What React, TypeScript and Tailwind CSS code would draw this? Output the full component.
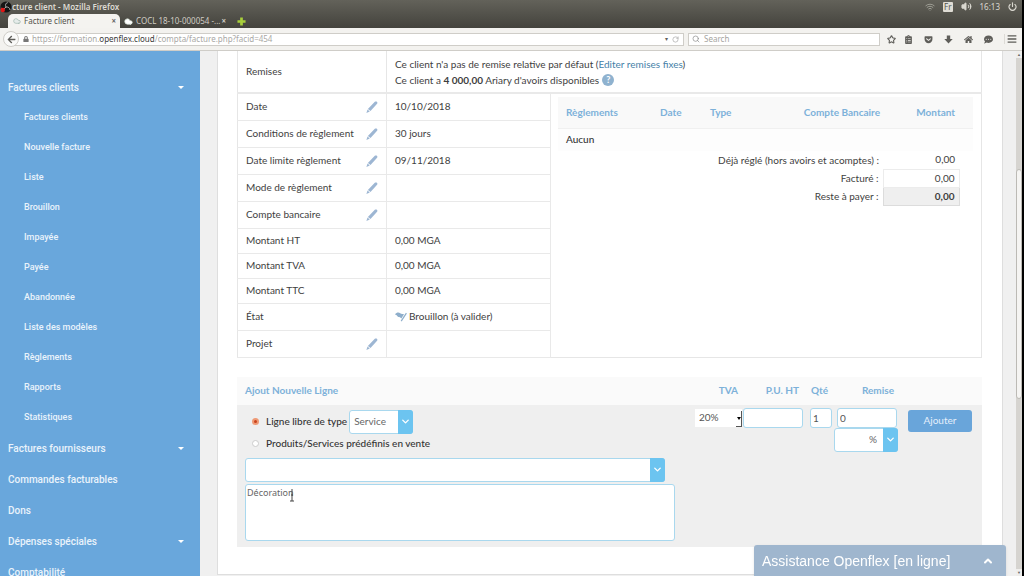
import React, { useState } from "react";
import { ChevronDown, ChevronUp, Cloud, RotateCw, Search, Star, Wifi, Volume2, Power } from "lucide-react";
import { FaBars, FaClipboardList, FaCommentDots, FaGetPocket, FaHome, FaLock, FaArrowLeft } from "react-icons/fa";

interface MenuItem {
  label: string;
  expandable?: boolean;
  children?: string[];
}

/** Sidebar entries */
const MENU: MenuItem[] = [
  {
    label: "Factures clients",
    expandable: true,
    children: [
      "Factures clients",
      "Nouvelle facture",
      "Liste",
      "Brouillon",
      "Impayée",
      "Payée",
      "Abandonnée",
      "Liste des modèles",
      "Règlements",
      "Rapports",
      "Statistiques",
    ],
  },
  { label: "Factures fournisseurs", expandable: true },
  { label: "Commandes facturables" },
  { label: "Dons" },
  { label: "Dépenses spéciales", expandable: true },
  { label: "Comptabilité" },
];

interface InvoiceField {
  label: string;
  value?: string;
  editable?: boolean;
  draft?: boolean;
}

const FIELDS: InvoiceField[] = [
  { label: "Date", value: "10/10/2018", editable: true },
  { label: "Conditions de règlement", value: "30 jours", editable: true },
  { label: "Date limite règlement", value: "09/11/2018", editable: true },
  { label: "Mode de règlement", editable: true },
  { label: "Compte bancaire", editable: true },
  { label: "Montant HT", value: "0,00 MGA" },
  { label: "Montant TVA", value: "0,00 MGA" },
  { label: "Montant TTC", value: "0,00 MGA" },
  { label: "État", value: "Brouillon (à valider)", draft: true },
  { label: "Projet", editable: true },
];

function PencilIcon() {
  return (
    <svg viewBox="0 0 12 12" className="h-3 w-3" fill="#9db6d3">
      <path d="M8.800.8c.6-.6 1.500-.5 2.100 0s.7 1.300.2 1.900L4.500 10 1.900 7.900zM1.500 8.500l2.300 1.900L.4 11.900z" />
    </svg>
  );
}

function DraftIcon() {
  return (
    <svg viewBox="0 0 12 10" className="h-[10px] w-3" fill="none">
      <path d="M0 2.6C1.6 0 4 .2 5.2 1.2 6.6 2.2 7.6 1.6 9 2.2L6.4 6.6C5.2 4.4 3 5.4 2.4 4.2 1.8 3 .8 3.2 0 2.6z" fill="#8eaecb" />
      <path d="M11.4 1.2 6.2 9.2" stroke="#8eaecb" strokeWidth="1.2" />
    </svg>
  );
}

/** Title bar, tab strip and address bar */
function BrowserChrome() {
  return (
    <header className="shrink-0 font-['Noto_Sans',sans-serif] text-[8px] whitespace-nowrap">
      <div className="bg-linear-to-b from-[#63625a] to-[#44433d]">
        <div className="flex h-[13px] items-center">
          <svg viewBox="0 0 12 12" className="h-3 w-3">
            <circle cx="6" cy="6" r="5.6" fill="#151515" />
            <path d="M6 6c-1-2-.4-4 1.8-4.4M6 6c2.200-.2 4 1 4 3M6 6c-1.400 2-3 2.400-4.600 1.200" stroke="#aaa" strokeWidth="1" fill="none" />
            <circle cx="2.800" cy="9" r="2.200" fill="#e01616" />
          </svg>
          <h1 className="font-semibold text-[#dedbd3]">cture client - Mozilla Firefox</h1>
          <div className="ml-auto flex items-center gap-2 pr-[5px] text-[#dad8d0]">
            <Wifi size={10} className="text-[#aaa9a0]" />
            <span className="rounded-[1px] bg-[#dfdcd5] px-px text-[#55544e] leading-[10px]">Fr</span>
            <Volume2 size={11} fill="currentColor" />
            <span>16:13</span>
            <Power size={9} strokeWidth={3} />
          </div>
        </div>
        <div className="flex h-[15px] items-end pl-2">
          <div className="flex h-[14px] w-[112px] items-center rounded-t-[5px] bg-[#f4f3f0] pr-1 pl-[5px] text-[#55534e]">
            <Cloud size={8} fill="#e6ecea" className="text-[#9db3ab]" />
            <span className="ml-[3px]">Facture client</span>
            <button aria-label="Fermer l'onglet" className="ml-auto font-bold text-[#666]">×</button>
          </div>
          <div className="flex h-[14px] w-[110px] items-center pr-1 pl-1 text-[#cfccc4]">
            <Cloud size={9} fill="#fff" className="text-[#dfe9df]" />
            <span className="ml-[3px]">COCL 18-10-000054 -...</span>
            <button aria-label="Fermer l'onglet" className="ml-auto font-bold">×</button>
          </div>
          <button aria-label="Nouvel onglet" className="flex h-[14px] items-center pl-[7px]">
            <svg viewBox="0 0 10 10" className="h-[9px] w-[9px]">
              <path d="M3.500 .5h3v3h3v3h-3v3h-3v-3h-3v-3h3z" fill="#a8cf3a" />
            </svg>
          </button>
        </div>
      </div>
      <div className="flex h-[23px] items-center border-b border-[#cfcdc8] bg-[#f3f2ef] pr-[5px] pl-[3px] text-[#5f5e5a]">
        <button aria-label="Retour" className="z-10 flex h-4 w-4 items-center justify-center rounded-full border border-[#cfcdc8] bg-[#fafaf9]">
          <FaArrowLeft size={9} />
        </button>
        <div className="-ml-1 flex h-[13px] flex-1 items-center border border-[#cfcdc8] bg-white pl-[7px]">
          <FaLock size={6} className="text-[#777]" />
          <span className="ml-[3px] text-[#a9a8a5]">
            https://formation.<span className="text-[#3b3b39]">openflex.cloud</span>/compta/facture.php?facid=454
          </span>
          <span className="ml-auto text-[6px]">▾</span>
          <button aria-label="Actualiser" className="mx-1">
            <RotateCw size={7} className="text-[#999]" />
          </button>
        </div>
        <label className="ml-1 flex h-[13px] w-[192px] items-center gap-1 border border-[#cfcdc8] bg-white pl-[3px]">
          <Search size={8} className="text-[#888]" />
          <input aria-label="Search" placeholder="Search" className="min-w-0 flex-1 outline-none placeholder:text-[#a5a4a0]" />
        </label>
        <div className="ml-[7px] flex items-center gap-[11px]">
          <div className="flex items-center gap-2">
            <Star size={9} strokeWidth={3} />
            <FaClipboardList size={9} />
          </div>
          <FaGetPocket size={9} />
          <svg viewBox="0 0 9 9" className="h-[9px] w-[9px]" fill="currentColor">
            <path d="M2.800 .5h3.400v3.500h2.500L4.500 8.500.3 4h2.500z" />
          </svg>
          <FaHome size={9} />
          <FaCommentDots size={9} />
          <div className="flex items-center border-l border-[#dddbd6] pl-[2px]">
            <FaBars size={10} />
          </div>
        </div>
      </div>
    </header>
  );
}

function Sidebar() {
  return (
    <nav className="w-[200px] shrink-0 overflow-hidden bg-[#69a7dc] pt-[21px] font-[Roboto,sans-serif] font-medium text-[#e9f3fb]">
      <ul>
        {MENU.map((item) => (
          <li key={item.label}>
            <a href="#" className="flex h-[31px] items-center justify-between pr-4 pl-2 text-[10px]">
              {item.label}
              {item.expandable && <span className="border-x-[3px] border-t-[3px] border-x-transparent border-t-white" />}
            </a>
            {item.children && (
              <ul>
                {item.children.map((child) => (
                  <li key={child}>
                    <a href="#" className="flex h-[30px] items-center pl-6 text-[9px]">
                      {child}
                    </a>
                  </li>
                ))}
              </ul>
            )}
          </li>
        ))}
      </ul>
    </nav>
  );
}

/** Payments already received and what is left to pay */
function PaymentsPanel() {
  return (
    <div className="pt-[3px] pr-2 pl-[7px]">
      <table className="w-full bg-[#fdfdfd]">
        <thead>
          <tr className="h-[31px] border-b border-[#f0f0f0] bg-[#f9f9f9] text-[#7db1d9]">
            <th className="pl-2 text-left">Règlements</th>
            <th className="w-[50px] text-left">Date</th>
            <th className="w-[70px] text-left">Type</th>
            <th className="w-[100px] text-right">Compte Bancaire</th>
            <th className="w-[93px] pr-[18px] text-right">Montant</th>
          </tr>
        </thead>
        <tbody>
          <tr className="h-[23px]">
            <td colSpan={5} className="pl-2 font-medium text-[#333]">Aucun</td>
          </tr>
        </tbody>
      </table>
      <table className="w-full text-right">
        <tbody>
          <tr className="h-[18px]">
            <td className="pr-1">Déjà réglé (hors avoirs et acomptes) :</td>
            <td className="w-[76px] pr-1">0,00</td>
            <td className="w-[14px]" />
          </tr>
          <tr className="h-[18px]">
            <td className="pr-1">Facturé :</td>
            <td className="border border-[#ececec] pr-1">0,00</td>
            <td />
          </tr>
          <tr className="h-[18px]">
            <td className="pr-1">Reste à payer :</td>
            <td className="border border-[#dcdcdc] bg-[#efefef] pr-1 font-bold">0,00</td>
            <td />
          </tr>
        </tbody>
      </table>
    </div>
  );
}

function InvoiceTable() {
  return (
    <table className="w-full table-fixed border border-t-0 border-[#e6e6e6]">
      <colgroup>
        <col className="w-[149px]" />
        <col className="w-[164px]" />
        <col />
      </colgroup>
      <tbody>
        <tr className="h-[42px] border-b-2 border-[#e9e9e9]">
          <th scope="row" className="border-r border-[#e6e6e6] pl-2 text-left font-normal">Remises</th>
          <td colSpan={2} className="pl-2 leading-4">
            <p>
              Ce client n'a pas de remise relative par défaut (<a href="#" className="text-[#4581a8]">Editer remises fixes</a>)
            </p>
            <p className="flex items-center">
              <span>Ce client a <b>4 000,00</b> Ariary d'avoirs disponibles</span>
              <span className="ml-[3px] flex h-3 w-3 items-center justify-center rounded-full bg-[#8fb2cf] text-[9px] font-bold text-white">?</span>
            </p>
          </td>
        </tr>
        {FIELDS.map((field, idx) => (
          <tr key={field.label} className={field.editable || field.draft ? "h-[27px]" : "h-[25px]"}>
            <th scope="row" className="border-r border-b border-[#e9e9e9] pr-2 pl-2 font-normal">
              <div className="flex items-center justify-between">
                {field.label}
                {field.editable && (
                  <button aria-label={`Modifier ${field.label}`}>
                    <PencilIcon />
                  </button>
                )}
              </div>
            </th>
            <td className="border-r border-b border-[#e9e9e9] pl-2">
              <div className="flex items-center gap-[2px]">
                {field.draft && <DraftIcon />}
                {field.value}
              </div>
            </td>
            {idx === 0 && (
              <td rowSpan={FIELDS.length} className="align-top">
                <PaymentsPanel />
              </td>
            )}
          </tr>
        ))}
      </tbody>
    </table>
  );
}

interface BlueSelectProps {
  label: string;
  options: string[];
  className?: string;
  selectClassName?: string;
}

/** Drop-down with a blue arrow block on its right */
function BlueSelect({ label, options, className = "", selectClassName = "" }: BlueSelectProps) {
  return (
    <span className={`relative block h-6 ${className}`}>
      <select
        aria-label={label}
        className={`h-full w-full appearance-none rounded-[3px] border border-[#a9d8ee] bg-white pl-1 font-normal text-[#666] outline-none ${selectClassName}`}
      >
        {options.map((option) => (
          <option key={option}>{option}</option>
        ))}
      </select>
      <span className="pointer-events-none absolute inset-y-0 right-0 flex w-[15px] items-center justify-center rounded-r-[3px] bg-[#6cc4f0] text-white">
        <ChevronDown size={11} strokeWidth={3} />
      </span>
    </span>
  );
}

const LINE_GRID = "grid grid-cols-[minmax(0,1fr)_49px_63px_29px_64px_84px]";
const FIELD = "h-5 rounded-[3px] border border-[#a9d8ee] bg-white px-[2px] text-[#555] outline-none";

function NewLineForm() {
  const [kind, setKind] = useState("free");
  const [description, setDescription] = useState("Décoration");

  return (
    <form className="mt-[19px]">
      <div className={`${LINE_GRID} h-[28px] items-center bg-[#fafafa] text-right font-bold text-[#7db1d9]`}>
        <h2 className="pl-2 text-left">Ajout Nouvelle Ligne</h2>
        <span className="pr-1">TVA</span>
        <span className="pr-[6px]">P.U. HT</span>
        <span className="pr-[6px]">Qté</span>
        <span className="pr-1">Remise</span>
      </div>
      <div className={`${LINE_GRID} items-start bg-[#efefef] pb-[6px]`}>
        <div className="pt-[5px] pr-[18px] pl-2 font-medium text-[#333]">
          <div className="flex h-6 items-center">
            <label className="flex items-center">
              <input
                type="radio"
                name="kind"
                checked={kind === "free"}
                onChange={() => setKind("free")}
                className="mx-[7px] h-[7px] w-[7px] appearance-none rounded-full border border-[#ccc] bg-white checked:border-2 checked:border-[#ee9a76] checked:bg-[#c9421c]"
              />
              Ligne libre de type
            </label>
            <BlueSelect label="Type de ligne" options={["Service", "Produit"]} className="ml-[2px] w-16" />
          </div>
          <label className="flex h-5 items-center">
            <input
              type="radio"
              name="kind"
              checked={kind === "predefined"}
              onChange={() => setKind("predefined")}
              className="mx-[7px] h-[7px] w-[7px] appearance-none rounded-full border border-[#ccc] bg-white checked:border-2 checked:border-[#ee9a76] checked:bg-[#c9421c]"
            />
            Produits/Services prédéfinis en vente
          </label>
          <BlueSelect label="Produit ou service" options={[""]} className="mt-1 mr-[10px]" />
          <div className="relative mt-[2px]">
            <textarea
              aria-label="Description"
              value={description}
              onChange={(e) => setDescription(e.target.value)}
              className="block h-[57px] w-full resize-none rounded-[3px] border border-[#a9d8ee] bg-white px-px py-[2px] font-['Noto_Sans',sans-serif] text-[9px] leading-[12px] font-normal text-[#666] outline-none"
            />
            {/* text pointer */}
            <svg viewBox="0 0 6 14" className="absolute top-1 left-[44px] h-[14px] w-[6px]" fill="none" stroke="#444">
              <path d="M3 1v12M1 13h4M2 7h2" />
            </svg>
          </div>
        </div>
        <span className="relative mt-1 ml-[2px] block h-[18px]">
          <select aria-label="TVA" className="h-full w-full appearance-none bg-white pl-1 text-[#555] outline-none">
            <option>20%</option>
            <option>0%</option>
          </select>
          <span className="pointer-events-none absolute right-0 bottom-0 flex h-4 w-[6px] items-center justify-end border-r border-b border-[#555]">
            <span className="border-x-[2px] border-t-[3px] border-x-transparent border-t-black" />
          </span>
        </span>
        <input aria-label="P.U. HT" className={`${FIELD} mt-[3px] mr-[2px] ml-px min-w-0`} />
        <input aria-label="Qté" defaultValue="1" className={`${FIELD} mt-[3px] mr-[2px] ml-[5px] min-w-0`} />
        <div className="pt-[3px]">
          <input aria-label="Remise" defaultValue="0" className={`${FIELD} ml-[3px] block w-[60px]`} />
          <BlueSelect label="Unité de remise" options={["%", "MGA"]} selectClassName="pl-[34px]" />
        </div>
        <button type="button" className="mt-[5px] mr-[10px] ml-[10px] h-[22px] rounded-[3px] bg-[#69a5da] text-[#e4effa]">
          Ajouter
        </button>
      </div>
    </form>
  );
}

function Scrollbar() {
  return (
    <div className="flex w-[6px] shrink-0 flex-col bg-[#d6d4d0]">
      <span className="h-[7px] bg-[#efeeec] text-center text-[4px] leading-[7px] text-[#666]">▲</span>
      <span className="h-[111px]" />
      <span className="h-[230px] rounded-[3px] border border-[#bcbab5] bg-[#f5f4f2]" />
      <span className="mt-auto h-[7px] bg-[#efeeec] text-center text-[4px] leading-[7px] text-[#666]">▼</span>
    </div>
  );
}

export default function App() {
  return (
    <div className="flex h-screen flex-col overflow-hidden border-r-2 border-black bg-[#f0f0f0]">
      <BrowserChrome />
      <div className="flex min-h-0 flex-1">
        <Sidebar />
        <main className="min-w-0 flex-1 overflow-hidden pr-[13px] pl-[17px] font-[Lato,'Noto_Sans',sans-serif] text-[10px] text-[#3e3e3e]">
          <div className="border-x border-b border-[#dedede] bg-white pr-5 pb-[27px] pl-[19px]">
            <InvoiceTable />
            <NewLineForm />
          </div>
        </main>
        <Scrollbar />
      </div>
      <button className="fixed right-[18px] bottom-0 flex h-[31px] w-[252px] items-center justify-between rounded-t-[3px] bg-[#9fb6ce] px-2 font-['Liberation_Sans',Arial,sans-serif] text-sm text-white shadow">
        Assistance Openflex [en ligne]
        <ChevronUp size={12} strokeWidth={4} className="mr-1" />
      </button>
    </div>
  );
}
